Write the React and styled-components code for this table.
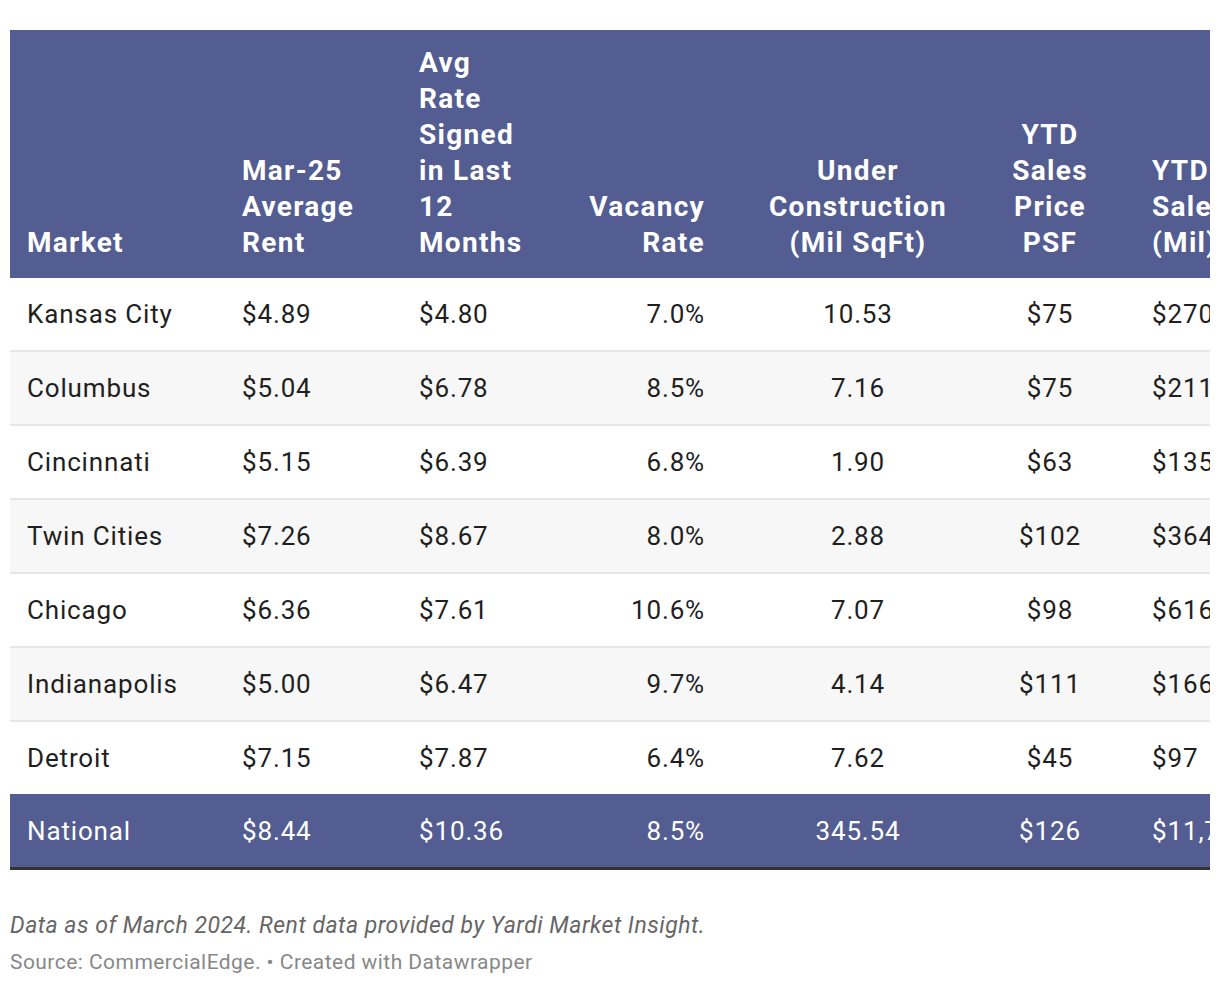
import React from "react";
import styled, { createGlobalStyle } from "styled-components";

const GlobalStyle = createGlobalStyle`
  body {
    margin: 0;
    background: #ffffff;
    font-family: Roboto, "Liberation Sans", Arial, sans-serif;
  }
`;

const Page = styled.div`
  padding: 30px 10px 20px 10px;
`;

const Clip = styled.div`
  width: 1200px;
  overflow: hidden;
`;

const Table = styled.table`
  width: 1300px;
  table-layout: fixed;
  border-collapse: collapse;
  border-bottom: 3px solid #333333;
`;

const HeadCell = styled.th`
  background: #535d91;
  color: #ffffff;
  font-size: 28px;
  font-weight: 700;
  line-height: 36px;
  letter-spacing: 1.3px;
  vertical-align: bottom;
  text-align: ${(p) => p.$align || "left"};
  padding: 15px ${(p) => p.$pr ?? 17}px 17px ${(p) => p.$pl ?? 17}px;
`;

const Row = styled.tr`
  background: ${(p) => (p.$total ? "#535d91" : p.$striped ? "#f7f7f7" : "#ffffff")};
  color: ${(p) => (p.$total ? "#ffffff" : "#1f1f1f")};
  border-top: ${(p) => (p.$total ? "none" : "2px solid #e6e6e6")};

  &:first-child {
    border-top: none;
  }
`;

const Cell = styled.td`
  height: ${(p) => (p.$total ? 73 : 72)}px;
  font-size: 26px;
  line-height: 34px;
  letter-spacing: 0.85px;
  white-space: nowrap;
  text-align: ${(p) => p.$align || "left"};
  padding: 0 ${(p) => p.$pr ?? 17}px 0 ${(p) => p.$pl ?? 17}px;
`;

const Notes = styled.div`
  margin-top: 40px;
`;

const Note = styled.p`
  margin: 0;
  font-size: 23px;
  font-style: italic;
  letter-spacing: 0.5px;
  color: #666666;
  line-height: 32px;
`;

const Source = styled.p`
  margin: 5px 0 0 0;
  font-size: 21px;
  letter-spacing: 0.45px;
  color: #888888;
  line-height: 30px;
`;

const columns = [
  { width: 215, align: "left", label: ["Market"] },
  { width: 177, align: "left", label: ["Mar-25", "Average", "Rent"] },
  { width: 158, align: "left", label: ["Avg", "Rate", "Signed", "in Last", "12", "Months"] },
  { width: 162, align: "right", label: ["Vacancy", "Rate"] },
  { width: 272, align: "center", label: ["Under", "Construction", "(Mil SqFt)"] },
  { width: 141, align: "center", pr: 29, pl: 0, label: ["YTD", "Sales", "Price", "PSF"] },
  { width: 175, align: "left", label: ["YTD", "Sales", "(Mil)"] },
];

const rows = [
  ["Kansas City", "$4.89", "$4.80", "7.0%", "10.53", "$75", "$270"],
  ["Columbus", "$5.04", "$6.78", "8.5%", "7.16", "$75", "$211"],
  ["Cincinnati", "$5.15", "$6.39", "6.8%", "1.90", "$63", "$135"],
  ["Twin Cities", "$7.26", "$8.67", "8.0%", "2.88", "$102", "$364"],
  ["Chicago", "$6.36", "$7.61", "10.6%", "7.07", "$98", "$616"],
  ["Indianapolis", "$5.00", "$6.47", "9.7%", "4.14", "$111", "$166"],
  ["Detroit", "$7.15", "$7.87", "6.4%", "7.62", "$45", "$97"],
  ["National", "$8.44", "$10.36", "8.5%", "345.54", "$126", "$11,742"],
];

export default function App() {
  return (
    <Page>
      <GlobalStyle />
      <Clip>
        <Table>
          <colgroup>
            {columns.map((c, i) => (
              <col key={i} style={{ width: c.width }} />
            ))}
          </colgroup>
          <thead>
            <tr>
              {columns.map((c, i) => (
                <HeadCell key={i} $align={c.align} $pr={c.pr} $pl={c.pl}>
                  {c.label.map((line, j) => (
                    <React.Fragment key={j}>
                      {j > 0 && <br />}
                      {line}
                    </React.Fragment>
                  ))}
                </HeadCell>
              ))}
            </tr>
          </thead>
          <tbody>
            {rows.map((r, i) => {
              const total = i === rows.length - 1;
              return (
                <Row key={i} $striped={i % 2 === 1} $total={total}>
                  {r.map((v, j) => (
                    <Cell
                      key={j}
                      $total={total}
                      $align={columns[j].align}
                      $pr={columns[j].pr}
                      $pl={columns[j].pl}
                    >
                      {v}
                    </Cell>
                  ))}
                </Row>
              );
            })}
          </tbody>
        </Table>
      </Clip>
      <Notes>
        <Note>Data as of March 2024. Rent data provided by Yardi Market Insight.</Note>
        <Source>Source: CommercialEdge. • Created with Datawrapper</Source>
      </Notes>
    </Page>
  );
}
